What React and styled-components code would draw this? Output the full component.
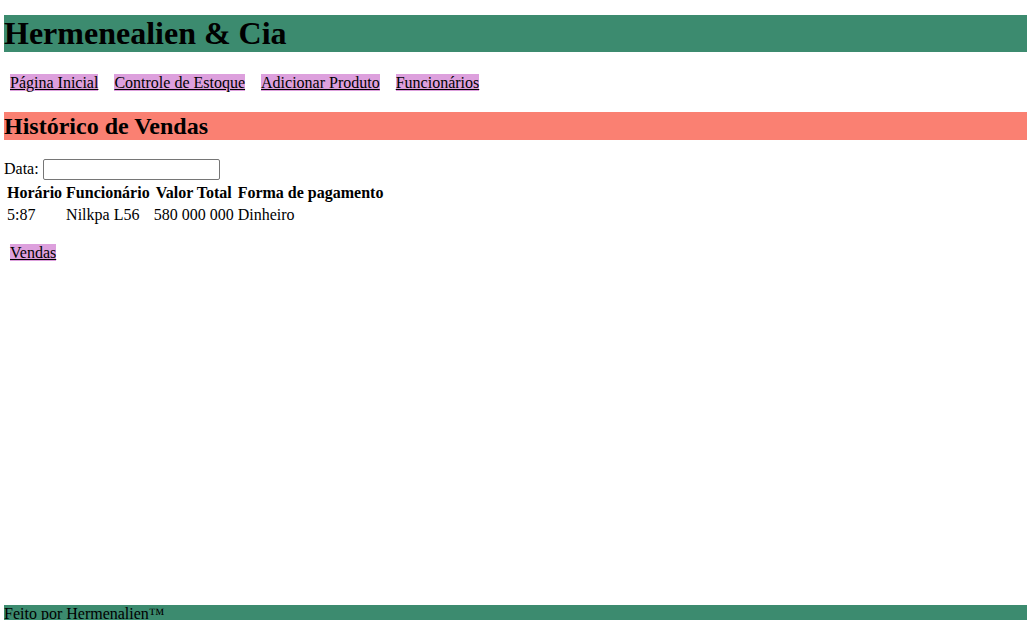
import React from "react";
import styled, { createGlobalStyle } from "styled-components";

const GlobalStyle = createGlobalStyle`
  body {
    margin: 0;
    font-family: "Liberation Serif", "Times New Roman", serif;
    font-size: 16px;
    color: #000;
    background: #fff;
  }
`;

const Page = styled.div`
  min-height: 100vh;
  height: 100vh;
  overflow: hidden;
  display: flex;
  flex-direction: column;
  padding: 15px 0 0 4px;
  box-sizing: border-box;
`;

const Main = styled.main`
  flex: 1;
`;

const Header = styled.h1`
  margin: 0 0 21px;
  background-color: #3c8b6f;
  font-size: 32px;
  font-weight: bold;
  line-height: 37px;
`;

const Nav = styled.nav`
  margin: 0;
  line-height: 19px;
`;

const NavLink = styled.a`
  margin: 0 6px;
  background-color: plum;
  color: #000;
  text-decoration: underline;
`;

const Section = styled.section``;

const SectionTitle = styled.h2`
  margin: 20px 0 19px;
  background-color: salmon;
  font-size: 24px;
  font-weight: bold;
  line-height: 28px;
`;

const Filter = styled.label`
  display: flex;
  align-items: flex-start;
  gap: 4px;
  height: 22px;
  line-height: 19px;
`;

const DateInput = styled.input`
  width: 177px;
  height: 21px;
  box-sizing: border-box;
  margin: 0;
  border: 1px solid #767676;
  border-radius: 2px;
  padding: 1px 2px;
`;

const Table = styled.table`
  border-spacing: 2px;
  margin-top: 0;
`;

const Th = styled.th`
  padding: 1px;
  text-align: center;
  font-weight: bold;
  line-height: 18px;
`;

const Td = styled.td`
  padding: 1px;
  line-height: 18px;
`;

const Bottom = styled.p`
  margin: 16px 0;
  line-height: 19px;
`;

const Footer = styled.footer`
  background-color: #3c8b6f;
  line-height: 18px;
  margin-bottom: -3px;
`;

const vendas = [
  { horario: "5:87", funcionario: "Nilkpa L56", valor: "580 000 000", pagamento: "Dinheiro" },
];

export default function App() {
  return (
    <>
      <GlobalStyle />
      <Page>
        <Main>
          <Header>Hermenealien &amp; Cia</Header>
          <Nav>
            <NavLink href="#">Página Inicial</NavLink>{" "}
            <NavLink href="#">Controle de Estoque</NavLink>{" "}
            <NavLink href="#">Adicionar Produto</NavLink>{" "}
            <NavLink href="#">Funcionários</NavLink>
          </Nav>
          <Section>
            <SectionTitle>Histórico de Vendas</SectionTitle>
            <Filter>
              Data: <DateInput type="text" />
            </Filter>
            <Table>
              <thead>
                <tr>
                  <Th>Horário</Th>
                  <Th>Funcionário</Th>
                  <Th>Valor Total</Th>
                  <Th>Forma de pagamento</Th>
                </tr>
              </thead>
              <tbody>
                {vendas.map((v, i) => (
                  <tr key={i}>
                    <Td>{v.horario}</Td>
                    <Td>{v.funcionario}</Td>
                    <Td>{v.valor}</Td>
                    <Td>{v.pagamento}</Td>
                  </tr>
                ))}
              </tbody>
            </Table>
            <Bottom>
              <NavLink href="#">Vendas</NavLink>
            </Bottom>
          </Section>
        </Main>
        <Footer>Feito por Hermenalien™</Footer>
      </Page>
    </>
  );
}
